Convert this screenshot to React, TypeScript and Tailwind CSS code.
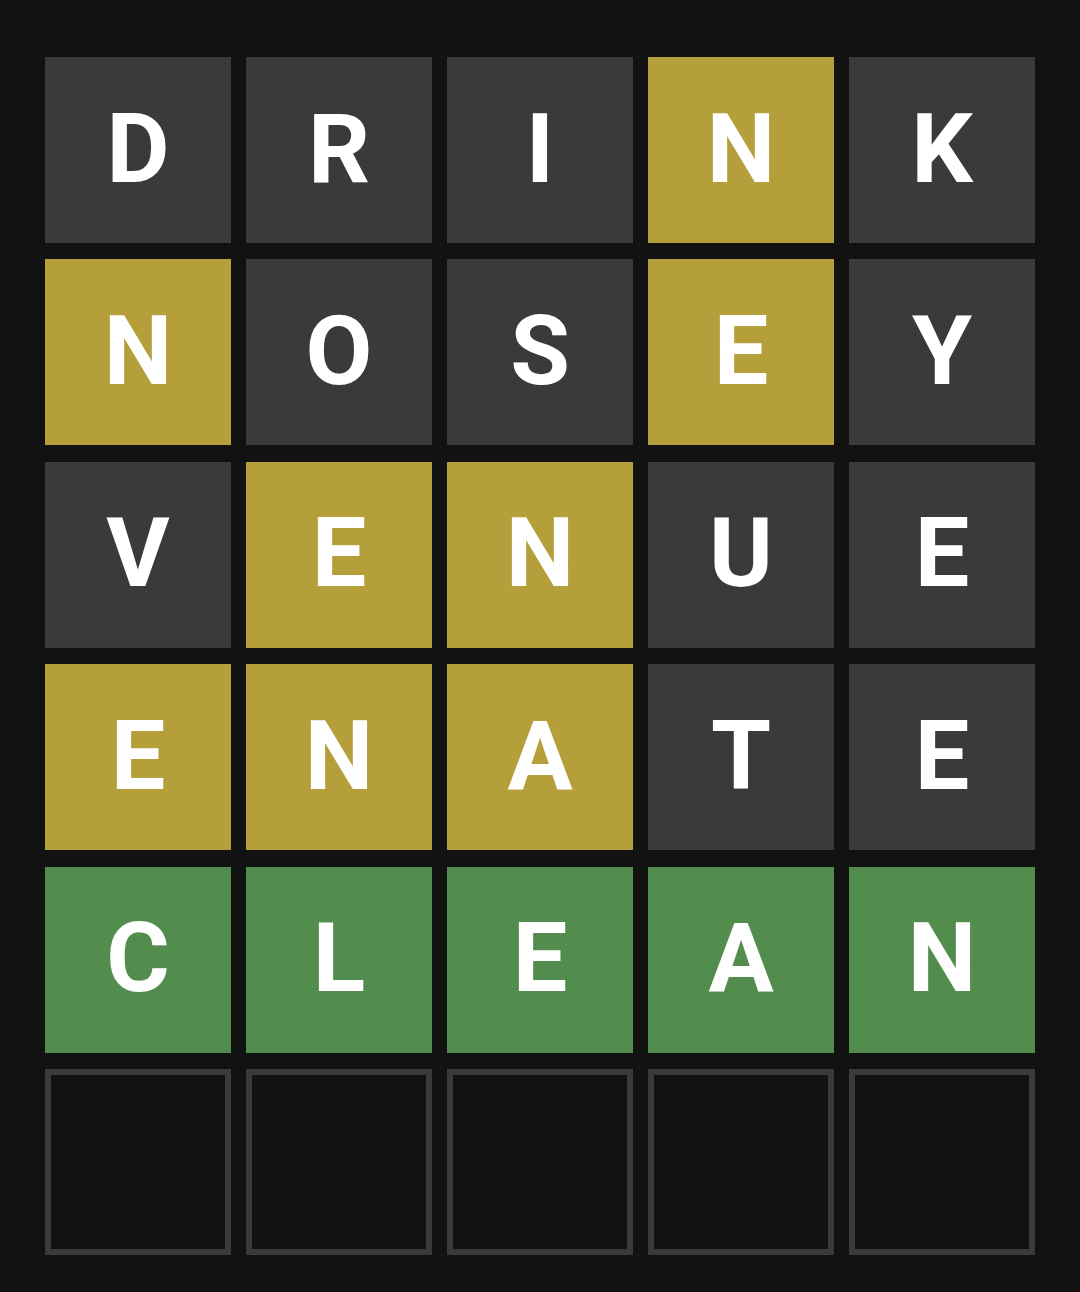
import React from "react";

type S = "g" | "y" | "c" | "e";
const rows: { l: string; s: S }[][] = [
  [["D","g"],["R","g"],["I","g"],["N","y"],["K","g"]],
  [["N","y"],["O","g"],["S","g"],["E","y"],["Y","g"]],
  [["V","g"],["E","y"],["N","y"],["U","g"],["E","g"]],
  [["E","y"],["N","y"],["A","y"],["T","g"],["E","g"]],
  [["C","c"],["L","c"],["E","c"],["A","c"],["N","c"]],
  [["","e"],["","e"],["","e"],["","e"],["","e"]],
].map((r) => r.map(([l, s]) => ({ l: l as string, s: s as S })));

const cls: Record<S, string> = {
  g: "bg-[#3a3a3c]",
  y: "bg-[#b59f3b]",
  c: "bg-[#538d4e]",
  e: "border-[6px] border-[#3a3a3c] bg-[#121213]",
};

export default function App() {
  return (
    <div className="w-[1080px] h-[1292px] bg-[#121213] pt-[57px] pl-[45px]">
      <div className="grid grid-cols-[repeat(5,186px)] grid-rows-[repeat(6,186px)] gap-x-[15px] gap-y-[16.4px]">
        {rows.flat().map((t, i) => (
          <div
            key={i}
            className={`${cls[t.s]} flex items-center justify-center text-white font-bold text-[97px] leading-none pb-[2px]`}
            style={{ fontFamily: "Roboto, sans-serif" }}
          >
            {t.l}
          </div>
        ))}
      </div>
    </div>
  );
}
